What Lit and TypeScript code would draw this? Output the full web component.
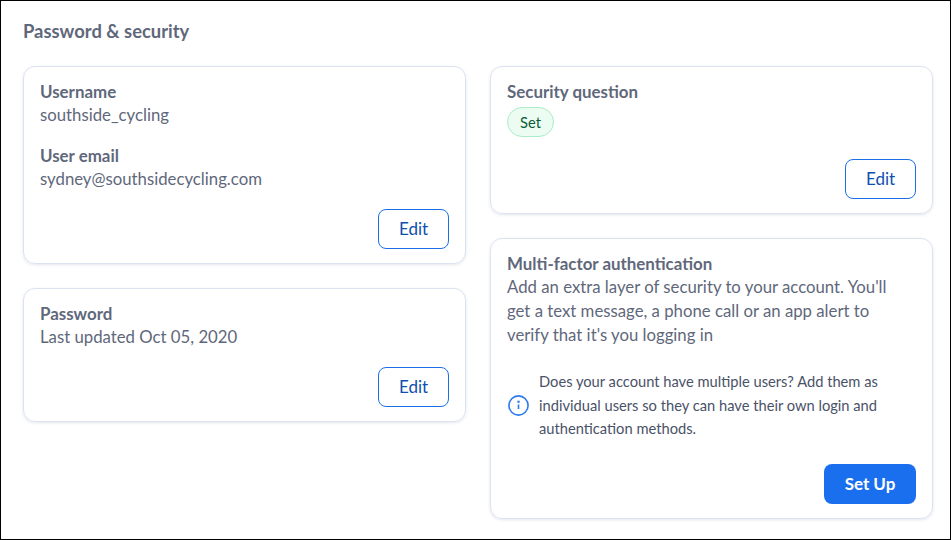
import { LitElement, html, css } from "lit";
import { customElement } from "lit/decorators.js";

@customElement("app-root")
export class AppRoot extends LitElement {
  static styles = css`
    :host { display: block; width: 951px; height: 540px; box-sizing: border-box; border: 1px solid #000; background: #fff; overflow: hidden; font-family: Lato, "Noto Sans", sans-serif; color: #5f687b; font-size: 16.75px; line-height: 24px; }
    .page { padding: 18px 22px 0 22px; }
    h1 { margin: 0 0 23px; font-size: 18.4px; line-height: 24px; font-weight: 700; color: #5f687b; }
    .cols { display: grid; grid-template-columns: 443px 443px; gap: 24px; }
    .col { display: flex; flex-direction: column; gap: 24px; }
    .card { box-sizing: border-box; border: 1px solid #dbe3f0; border-radius: 12px; padding: 13px 16px 14px; box-shadow: 0 1px 3px rgba(40,60,100,.12); display: flex; flex-direction: column; }
    .account { height: 198px; }
    .password { height: 134px; }
    .question { height: 148px; }
    .label { font-weight: 700; font-size: 16.9px; line-height: 23px; color: #5f687b; }
    .gap { margin-top: 17px; }
    .intro { padding-right: 16px; }
    .actions { display: flex; justify-content: flex-end; }
    .push { margin-top: auto; }
    button { font: inherit; font-size: 17px; height: 40px; border-radius: 8px; padding: 0; }
    .edit { width: 71px; border: 1px solid #1a6fe8; background: #fff; color: #0f4fb0; }
    .setup { width: 92px; border: 0; background: #1a6fef; color: #fff; font-weight: 700; }
    .badge { align-self: flex-start; height: 30px; width: 47px; text-align: center; line-height: 28px; box-sizing: border-box; margin-top: 4px; border: 1px solid #a9edc6; background: #ecfcf3; color: #0a5c36; border-radius: 15px; font-size: 14.7px; }
    .note { display: flex; align-items: center; gap: 11px; margin: 23px 0 23.5px; font-size: 14.7px; line-height: 23.5px; color: #4a5268; }
    .info { flex: none; margin-left: 1px; margin-right: -1px; }
  `;
  render() {
    return html`<div class="page">
      <h1>Password &amp; security</h1>
      <div class="cols">
        <div class="col">
          <section class="card account">
            <div class="label">Username</div><div>southside_cycling</div>
            <div class="label gap">User email</div><div>sydney@southsidecycling.com</div>
            <div class="actions push"><button class="edit">Edit</button></div>
          </section>
          <section class="card password">
            <div class="label">Password</div><div>Last updated Oct 05, 2020</div>
            <div class="actions push"><button class="edit">Edit</button></div>
          </section>
        </div>
        <div class="col">
          <section class="card question">
            <div class="label">Security question</div>
            <span class="badge">Set</span>
            <div class="actions push"><button class="edit">Edit</button></div>
          </section>
          <section class="card">
            <div class="label">Multi-factor authentication</div>
            <div class="intro">Add an extra layer of security to your account. You'll get a text message, a phone call or an app alert to verify that it's you logging in</div>
            <div class="note">
              <svg class="info" width="21" height="21" viewBox="0 0 21 21" fill="none" stroke="#2a7af0" stroke-width="1.6"><circle cx="10.5" cy="10.5" r="9.6"/><path d="M10.5 9.5v4.5" /><circle cx="10.5" cy="6.8" r=".5"/></svg>
              <div>Does your account have multiple users? Add them as individual users so they can have their own login and authentication methods.</div>
            </div>
            <div class="actions"><button class="setup">Set Up</button></div>
          </section>
        </div>
      </div>
    </div>`;
  }
}
